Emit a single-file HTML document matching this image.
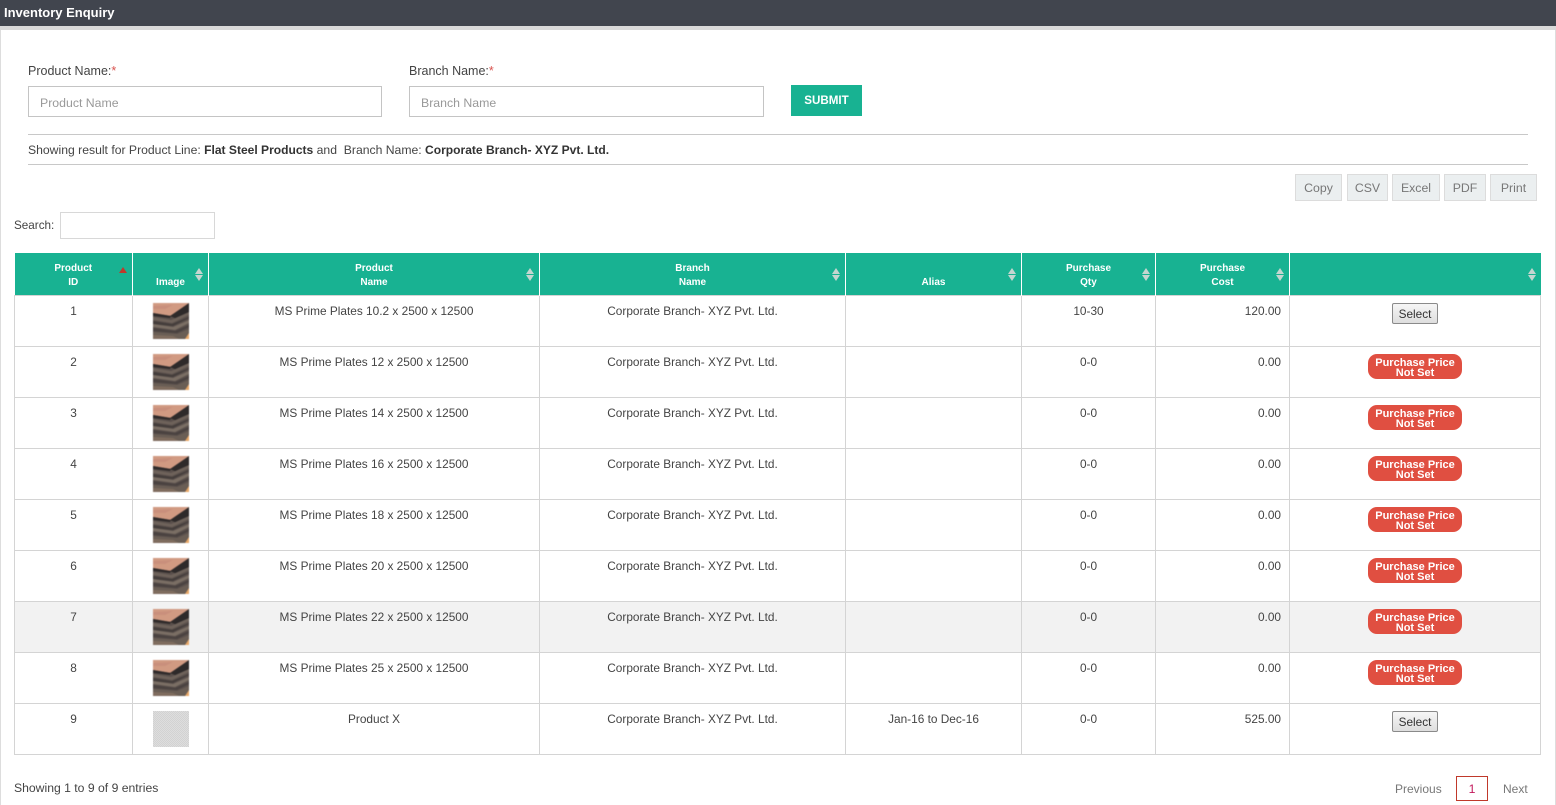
<!DOCTYPE html>
<html><head><meta charset="utf-8"><title>Inventory Enquiry</title>
<style>
html,body{margin:0;padding:0;background:#fff}
body{width:1556px;height:805px;position:relative;overflow:hidden;font-family:"Liberation Sans",sans-serif;font-size:12.2px;color:#444}
.a{position:absolute;white-space:nowrap}
.bar{left:0;top:0;width:1556px;height:26px;background:#41454e;color:#fff;font-weight:bold;font-size:13px;line-height:25px;text-indent:4px}
.lf{left:0;top:26px;width:1556px;height:4px;background:#d9d9d9}
.sl{left:0;top:30px;width:1px;height:775px;background:#ddd}
.sr{left:1555px;top:30px;width:1px;height:775px;background:#ddd}
.lab{font-size:12.5px;color:#444;top:63px;line-height:16px}
.lab i{color:#d9534f;font-style:normal}
.inp{box-sizing:border-box;top:86px;height:31px;border:1px solid #c4c4c4;background:#fff;color:#999;line-height:32px;padding-left:11px;font-size:12.3px}
.sub{left:791px;top:85px;width:71px;height:31px;background:#18b292;color:#fff;font-weight:bold;font-size:11.6px;line-height:31px;text-align:center}
.hr{left:28px;width:1500px;height:1px;background:#c8c8c8}
.tb{box-sizing:border-box;top:174px;height:27px;background:#ebeff0;border:1px solid #dcdcdc;color:#777;line-height:26px;text-align:center;font-size:12.3px}
table{position:absolute;left:14px;top:253px;width:1526px;border-collapse:collapse;table-layout:fixed}
th{background:#18b292;color:#fff;font-size:10px;line-height:14px;height:42px;padding:0 0 5px;vertical-align:bottom;border-left:1px solid #fff;border-right:1px solid #fff;box-sizing:border-box;position:relative;text-align:center}
th:first-child{border-left:0}th:last-child{border-right:0}
td{border:1px solid #d4d4d4;height:51px;box-sizing:border-box;padding:8px 8px 0;vertical-align:top;text-align:center;line-height:15px;font-size:11.85px;color:#444}
td.n{text-align:right}
td svg{display:block;margin:-1px auto 0;filter:blur(.5px)}
tr.h td{background:#f2f2f2}
.s{position:absolute;right:5px;top:15px;width:8px;height:13px}
.s:before,.s:after{content:"";position:absolute;left:0;border-left:4px solid transparent;border-right:4px solid transparent}
.s:before{top:0;border-bottom:6px solid #c5d6d0}
.s:after{bottom:0;border-top:6px solid #c5d6d0}
.up{position:absolute;right:5px;top:14px;width:0;height:0;border-left:4px solid transparent;border-right:4px solid transparent;border-bottom:6px solid #c0392b}
.sel{display:block;box-sizing:border-box;width:46px;height:21px;margin:-1px auto 0;border:1px solid #8a8a8a;border-radius:2px;background:linear-gradient(#f6f6f6,#dedede);line-height:21px;color:#333;font-size:11.8px}
.bad{display:block;box-sizing:border-box;width:94px;height:25px;margin:-1px auto 0;border-radius:9px;background:#e04f41;color:#fff;font-weight:bold;font-size:11px;line-height:10px;padding-top:4px}
.pg{left:1456px;top:776px;width:32px;height:25px;box-sizing:border-box;border:1px solid #c0392b;color:#c2185b;text-align:center;line-height:24px}
</style></head><body>
<svg width="0" height="0" style="position:absolute"><defs>
<symbol id="plate" viewBox="0 0 36 36">
<rect width="36" height="36" fill="#5a504c"/>
<polygon points="0,0 36,0 36,1 18,13 0,10" fill="#d19a82"/>
<polygon points="0,3 20,2 12,6 0,6" fill="#c98f7c"/>
<polygon points="36,0 36,10 24,16 17,13" fill="#2e2a2a"/>
<polygon points="0,10 18,13 17,15 0,13" fill="#2f2a2a"/>
<polygon points="0,14 18,17 36,9 36,12 19,20 0,17" fill="#6e625a"/>
<polygon points="0,18 19,21 36,14 36,15 20,23 0,21" fill="#443d3b"/>
<polygon points="0,21 20,24 36,17 36,20 22,27 0,24" fill="#7a6e64"/>
<polygon points="0,25 22,28 36,22 36,24 24,30 0,28" fill="#4a4240"/>
<polygon points="0,29 24,31 36,26 36,36 0,36" fill="#6a5e55"/>
<polygon points="0,32 20,33 26,36 0,36" fill="#7f6c5e"/>
<polygon points="32,36 36,30 36,36" fill="#e8a868"/>
</symbol>
<pattern id="chk" width="2" height="2" patternUnits="userSpaceOnUse"><rect width="2" height="2" fill="#dedede"/><rect width="1" height="1" fill="#d2d2d2"/><rect x="1" y="1" width="1" height="1" fill="#d2d2d2"/></pattern>
</defs></svg>

<div class="a bar">Inventory Enquiry</div>
<div class="a lf"></div><div class="a sl"></div><div class="a sr"></div>

<div class="a lab" style="left:28px">Product Name:<i>*</i></div>
<div class="a lab" style="left:409px">Branch Name:<i>*</i></div>
<div class="a inp" style="left:28px;width:354px">Product Name</div>
<div class="a inp" style="left:409px;width:355px">Branch Name</div>
<div class="a sub">SUBMIT</div>

<div class="a hr" style="top:134px"></div>
<div class="a" style="left:28px;top:142px;line-height:16px">Showing result for Product Line: <b style="color:#333;font-size:12.05px">Flat Steel Products</b> and&nbsp; Branch Name: <b style="color:#333;font-size:12.05px">Corporate Branch- XYZ Pvt. Ltd.</b></div>
<div class="a hr" style="top:164px"></div>

<div class="a tb" style="left:1295px;width:47px">Copy</div>
<div class="a tb" style="left:1347px;width:41px">CSV</div>
<div class="a tb" style="left:1392px;width:48px">Excel</div>
<div class="a tb" style="left:1444px;width:42px">PDF</div>
<div class="a tb" style="left:1490px;width:47px">Print</div>

<div class="a" style="left:14px;top:218px;line-height:16px;font-size:11.7px">Search:</div>
<div class="a" style="left:60px;top:212px;width:155px;height:27px;box-sizing:border-box;border:1px solid #d8d8d8"></div>

<table>
<colgroup><col style="width:118px"><col style="width:76px"><col style="width:331px"><col style="width:306px"><col style="width:176px"><col style="width:134px"><col style="width:134px"><col style="width:251px"></colgroup>
<thead><tr>
<th>Product<br>ID<span class="up"></span></th>
<th>Image<span class="s"></span></th>
<th>Product<br>Name<span class="s"></span></th>
<th>Branch<br>Name<span class="s"></span></th>
<th>Alias<span class="s"></span></th>
<th>Purchase<br>Qty<span class="s"></span></th>
<th>Purchase<br>Cost<span class="s"></span></th>
<th><span class="s"></span></th>
</tr></thead>
<tbody>
<tr><td>1</td><td><svg width="36" height="36"><use href="#plate"/></svg></td><td>MS Prime Plates 10.2 x 2500 x 12500</td><td>Corporate Branch- XYZ Pvt. Ltd.</td><td></td><td>10-30</td><td class="n">120.00</td><td><span class="sel">Select</span></td></tr>
<tr><td>2</td><td><svg width="36" height="36"><use href="#plate"/></svg></td><td>MS Prime Plates 12 x 2500 x 12500</td><td>Corporate Branch- XYZ Pvt. Ltd.</td><td></td><td>0-0</td><td class="n">0.00</td><td><span class="bad">Purchase Price<br>Not Set</span></td></tr>
<tr><td>3</td><td><svg width="36" height="36"><use href="#plate"/></svg></td><td>MS Prime Plates 14 x 2500 x 12500</td><td>Corporate Branch- XYZ Pvt. Ltd.</td><td></td><td>0-0</td><td class="n">0.00</td><td><span class="bad">Purchase Price<br>Not Set</span></td></tr>
<tr><td>4</td><td><svg width="36" height="36"><use href="#plate"/></svg></td><td>MS Prime Plates 16 x 2500 x 12500</td><td>Corporate Branch- XYZ Pvt. Ltd.</td><td></td><td>0-0</td><td class="n">0.00</td><td><span class="bad">Purchase Price<br>Not Set</span></td></tr>
<tr><td>5</td><td><svg width="36" height="36"><use href="#plate"/></svg></td><td>MS Prime Plates 18 x 2500 x 12500</td><td>Corporate Branch- XYZ Pvt. Ltd.</td><td></td><td>0-0</td><td class="n">0.00</td><td><span class="bad">Purchase Price<br>Not Set</span></td></tr>
<tr><td>6</td><td><svg width="36" height="36"><use href="#plate"/></svg></td><td>MS Prime Plates 20 x 2500 x 12500</td><td>Corporate Branch- XYZ Pvt. Ltd.</td><td></td><td>0-0</td><td class="n">0.00</td><td><span class="bad">Purchase Price<br>Not Set</span></td></tr>
<tr class="h"><td>7</td><td><svg width="36" height="36"><use href="#plate"/></svg></td><td>MS Prime Plates 22 x 2500 x 12500</td><td>Corporate Branch- XYZ Pvt. Ltd.</td><td></td><td>0-0</td><td class="n">0.00</td><td><span class="bad">Purchase Price<br>Not Set</span></td></tr>
<tr><td>8</td><td><svg width="36" height="36"><use href="#plate"/></svg></td><td>MS Prime Plates 25 x 2500 x 12500</td><td>Corporate Branch- XYZ Pvt. Ltd.</td><td></td><td>0-0</td><td class="n">0.00</td><td><span class="bad">Purchase Price<br>Not Set</span></td></tr>
<tr><td>9</td><td><svg width="36" height="36" style="filter:none"><rect width="36" height="36" fill="url(#chk)"/></svg></td><td>Product X</td><td>Corporate Branch- XYZ Pvt. Ltd.</td><td>Jan-16 to Dec-16</td><td>0-0</td><td class="n">525.00</td><td><span class="sel">Select</span></td></tr>
</tbody></table>

<div class="a" style="left:14px;top:780px;line-height:16px">Showing 1 to 9 of 9 entries</div>
<div class="a" style="left:1395px;top:781px;line-height:16px;color:#777;font-size:12px">Previous</div>
<div class="a pg">1</div>
<div class="a" style="left:1503px;top:781px;line-height:16px;color:#777;font-size:12px">Next</div>
</body></html>
